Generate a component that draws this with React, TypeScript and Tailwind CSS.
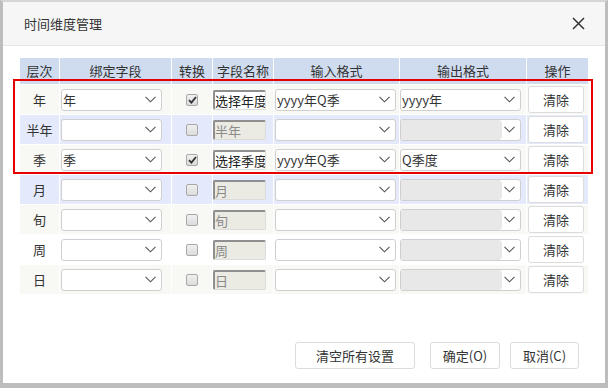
import React from 'react';

interface Row {
  level: string;
  bind: string;
  checked: boolean;
  name: string;
  enabled: boolean;
  input: string;
  output: string;
  bg: string;
}

const rows: Row[] = [
  { level: '年', bind: '年', checked: true, name: '选择年度', enabled: true, input: 'yyyy年Q季', output: 'yyyy年', bg: 'bg-[#f8f8f4]' },
  { level: '半年', bind: '', checked: false, name: '半年', enabled: false, input: '', output: '', bg: 'bg-[#e4eafb]' },
  { level: '季', bind: '季', checked: true, name: '选择季度', enabled: true, input: 'yyyy年Q季', output: 'Q季度', bg: 'bg-[#f8f8f4]' },
  { level: '月', bind: '', checked: false, name: '月', enabled: false, input: '', output: '', bg: 'bg-[#e4eafb]' },
  { level: '旬', bind: '', checked: false, name: '旬', enabled: false, input: '', output: '', bg: 'bg-[#f8f8f4]' },
  { level: '周', bind: '', checked: false, name: '周', enabled: false, input: '', output: '', bg: 'bg-white' },
  { level: '日', bind: '', checked: false, name: '日', enabled: false, input: '', output: '', bg: 'bg-[#f8f8f4]' },
];

const headers = ['层次', '绑定字段', '转换', '字段名称', '输入格式', '输出格式', '操作'];

function Chevron() {
  return (
    <svg width="11" height="7" viewBox="0 0 11 7" className="shrink-0">
      <polyline points="0.5,0.8 5.5,5.8 10.5,0.8" fill="none" stroke="#555" strokeWidth="1.1" />
    </svg>
  );
}

function Select({ value, width, disabled }: { value: string; width: string; disabled?: boolean }) {
  return (
    <div className={`${width} h-[22px] flex items-center bg-white border border-[#cfcfcf] rounded-[3px] overflow-hidden`}>
      {disabled ? (
        <div className="flex-1 h-full bg-[#e8e8e8] rounded-r-[4px]" />
      ) : (
        <span className="flex-1 pl-[1px] text-[13px] text-[#333] leading-[20px] whitespace-nowrap overflow-hidden">{value}</span>
      )}
      <div className="w-[18px] flex justify-center pr-[3px]">
        <Chevron />
      </div>
    </div>
  );
}

function Checkbox({ checked }: { checked: boolean }) {
  return (
    <div className="w-[12px] h-[12px] rounded-[2px] border border-[#a9a9a9] bg-gradient-to-b from-[#f0f0f0] to-[#dcdcdc] flex items-center justify-center">
      {checked && (
        <svg width="9" height="8" viewBox="0 0 9 8">
          <polyline points="1,4.2 3.4,6.6 8,1" fill="none" stroke="#333" strokeWidth="1.8" />
        </svg>
      )}
    </div>
  );
}

export default function App() {
  return (
    <div className="relative w-[608px] h-[388px] flex flex-col bg-white border-x-[3px] border-b-[5px] border-t-[2px] border-[#bdbdbd] border-t-[#d6d6d6] font-['Noto_Sans_CJK_SC',sans-serif] text-[#333]">
      {/* Title bar */}
      <div className="h-[44px] shrink-0 flex items-center justify-between pl-[21px] pr-[20px] bg-[#f6f6f6] border-b border-[#e6e6e6]">
        <span className="text-[13px] text-[#333]">时间维度管理</span>
        <svg width="13" height="13" viewBox="0 0 13 13">
          <path d="M1 1 L12 12 M12 1 L1 12" stroke="#333" strokeWidth="1.5" />
        </svg>
      </div>

      {/* Table */}
      <div className="flex-1 pt-[12px] px-[17px]">
        <div className="grid grid-cols-[39px_111px_40px_60px_125px_126px_61px] gap-px bg-white">
          {headers.map((h) => (
            <div key={h} className="h-[26px] flex items-center justify-center bg-[#cfdcef] text-[13px] text-[#333]">
              {h}
            </div>
          ))}
          {rows.map((r) => (
            <React.Fragment key={r.level}>
              <div className={`h-[29px] flex items-center justify-center text-[13px] ${r.bg}`}>{r.level}</div>
              <div className={`h-[29px] flex items-center pl-px ${r.bg}`}>
                <Select value={r.bind} width="w-[101px]" />
              </div>
              <div className={`h-[29px] flex items-center justify-center ${r.bg}`}>
                <Checkbox checked={r.checked} />
              </div>
              <div className={`h-[29px] flex items-center ${r.bg}`}>
                <div
                  className={`w-[53px] h-[20px] overflow-hidden whitespace-nowrap rounded-[2px] border-t-2 border-l-2 border-r border-b border-t-[#8f8f8f] border-l-[#8f8f8f] border-r-[#dcdcdc] border-b-[#dcdcdc] text-[13px] leading-[17px] ${
                    r.enabled ? 'bg-white text-[#222]' : 'bg-[#ebebe4] text-[#8a8a8a]'
                  }`}
                >
                  {r.name}
                </div>
              </div>
              <div className={`h-[29px] flex items-center pl-px ${r.bg}`}>
                <Select value={r.input} width="w-[121px]" />
              </div>
              <div className={`h-[29px] flex items-center ${r.bg}`}>
                <Select value={r.output} width="w-[121px]" disabled={!r.enabled} />
              </div>
              <div className={`h-[29px] flex items-center pl-px ${r.bg}`}>
                <button className="w-[56px] h-[27px] bg-white border border-[#dcdcdc] rounded-[3px] text-[13px] text-[#333]">
                  清除
                </button>
              </div>
            </React.Fragment>
          ))}
        </div>
      </div>

      {/* Footer */}
      <div className="shrink-0 flex justify-end items-center gap-[10px] pr-[26px] pb-[14px]">
        <button className="mr-[5px] w-[120px] h-[27px] bg-white border border-[#dcdcdc] rounded-[3px] text-[13px] text-[#333]">
          清空所有设置
        </button>
        <button className="w-[70px] h-[27px] bg-white border border-[#dcdcdc] rounded-[3px] text-[13px] text-[#333]">
          确定(O)
        </button>
        <button className="w-[69px] h-[27px] bg-white border border-[#dcdcdc] rounded-[3px] text-[13px] text-[#333]">
          取消(C)
        </button>
      </div>

      {/* Red highlight annotation */}
      <div className="absolute left-[10px] top-[77px] w-[580px] h-[95px] border-2 border-[#e60000] pointer-events-none" />
    </div>
  );
}
